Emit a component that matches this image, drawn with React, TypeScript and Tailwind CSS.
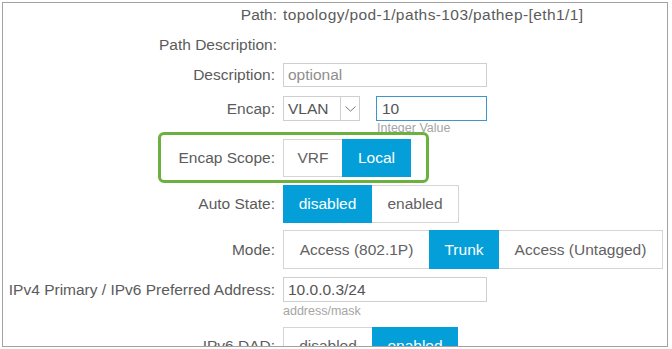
import React from "react";

const font = { fontFamily: '"Liberation Sans", Arial, sans-serif' };

type Seg = { label: string; w: string; on?: boolean };

const Toggle = ({ segs, h }: { segs: Seg[]; h: string }) => (
  <div className={`flex ${h}`}>
    {segs.map((s, i) => (
      <div
        key={s.label}
        className={`flex items-center justify-center border ${s.w} ${i > 0 ? "-ml-px" : ""} ${
          s.on
            ? "bg-[#049fd9] border-[#049fd9] text-white relative"
            : "bg-white border-[#d5d5d5] text-[#626262]"
        }`}
      >
        {s.label}
      </div>
    ))}
  </div>
);

const Label = ({ children, w = "w-[272px]" }: { children: React.ReactNode; w?: string }) => (
  <div className={`${w} shrink-0 text-right text-[#5b5b5b]`}>{children}</div>
);

export default function App() {
  return (
    <div className="w-[672px] h-[349px] bg-white pt-[2px] pl-[2px]" style={font}>
      <div className="w-[666px] h-[345px] border border-[#a2a2a2] overflow-hidden text-[15.5px] leading-none">
        {/* path */}
        <div className="flex items-center gap-[6px] h-[24px]">
          <Label w="w-[274px]">Path:</Label>
          <span className="text-[#5b5b5b] tracking-[0.4px]">topology/pod-1/paths-103/pathep-[eth1/1]</span>
        </div>
        <div className="flex items-center gap-2 h-[24px] mt-[6px]">
          <Label w="w-[274px]">Path Description:</Label>
        </div>
        <div className="flex items-center gap-2 h-[24px] mt-[6px]">
          <Label>Description:</Label>
          <div className="w-[204px] h-[24px] border border-[#cfcfcf] flex items-center px-[4px] text-[#8e8e8e]">
            optional
          </div>
        </div>

        {/* encap */}
        <div className="flex items-center gap-2 h-[25px] mt-[9px]">
          <Label>Encap:</Label>
          <div className="w-[77px] h-[25px] border border-[#cfcfcf] flex">
            <div className="flex-1 flex items-center px-[4px] text-[#555]">VLAN</div>
            <div className="w-[19px] border-l border-[#cfcfcf] flex items-center justify-center">
              <svg width="11" height="6" viewBox="0 0 11 6" fill="none">
                <path d="M0.5 0.5 L5.5 5.2 L10.5 0.5" stroke="#7a7a7a" strokeWidth="1" />
              </svg>
            </div>
          </div>
          <div className="ml-[8px] w-[111px] h-[25px] border border-[#3d97cc] flex items-center px-[5px] text-[#555]">
            10
          </div>
        </div>
        <div className="h-[11px] overflow-hidden pl-[374px] text-[12.5px] leading-[14px] text-[#a5a5a5]">
          Integer Value
        </div>

        {/* encap scope highlight */}
        <div className="ml-[155px] w-[271px] h-[51px] border-[3px] border-[#6cb13f] rounded-[6px] flex items-center gap-2">
          <Label w="w-[114px]">Encap Scope:</Label>
          <Toggle
            h="h-[38px]"
            segs={[
              { label: "VRF", w: "w-[60px]" },
              { label: "Local", w: "w-[69px]", on: true },
            ]}
          />
        </div>

        <div className="flex items-center gap-2 h-[38px] mt-[2px]">
          <Label>Auto State:</Label>
          <Toggle
            h="h-[38px]"
            segs={[
              { label: "disabled", w: "w-[89px]", on: true },
              { label: "enabled", w: "w-[88px]" },
            ]}
          />
        </div>

        <div className="flex items-center gap-2 h-[39px] mt-[7px]">
          <Label>Mode:</Label>
          <Toggle
            h="h-[39px]"
            segs={[
              { label: "Access (802.1P)", w: "w-[147px]" },
              { label: "Trunk", w: "w-[70px]", on: true },
              { label: "Access (Untagged)", w: "w-[165px]" },
            ]}
          />
        </div>

        <div className="flex items-center gap-2 h-[25px] mt-[8px]">
          <Label>IPv4 Primary / IPv6 Preferred Address:</Label>
          <div className="w-[204px] h-[25px] border border-[#cfcfcf] flex items-center px-[4px] text-[#555]">
            10.0.0.3/24
          </div>
        </div>
        <div className="h-[18px] pl-[280px] text-[12.5px] leading-[18px] text-[#a5a5a5]">address/mask</div>

        <div className="flex items-center gap-2 h-[38px] mt-[7px]">
          <Label>IPv6 DAD:</Label>
          <Toggle
            h="h-[38px]"
            segs={[
              { label: "disabled", w: "w-[90px]" },
              { label: "enabled", w: "w-[86px]", on: true },
            ]}
          />
        </div>
      </div>
    </div>
  );
}
